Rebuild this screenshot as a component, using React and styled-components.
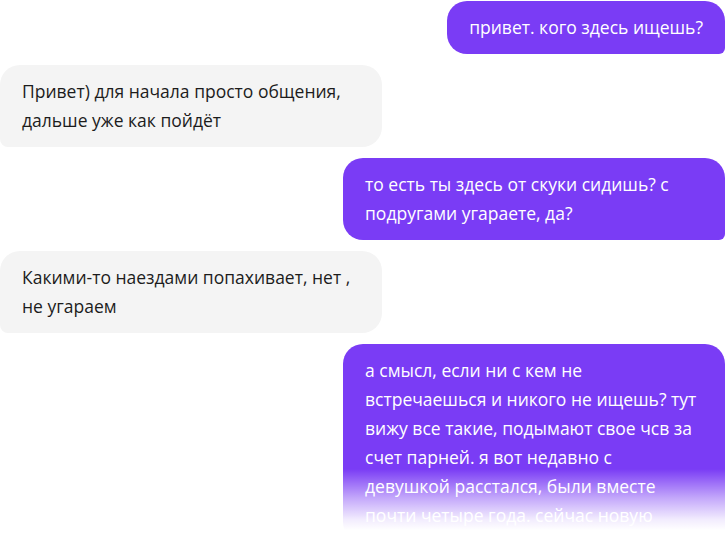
import React from "react";
import styled, { createGlobalStyle } from "styled-components";

const Global = createGlobalStyle`
  html, body { margin: 0; padding: 0; background: #ffffff; overflow: hidden; }
  body { font-family: "Open Sans", "Noto Sans", sans-serif; }
`;

const Chat = styled.div`
  width: 725px;
  height: 541px;
  box-sizing: border-box;
  padding-top: 1px;
  display: flex;
  flex-direction: column;
  gap: 11px;
  overflow: hidden;
  position: relative;
`;

const Bubble = styled.div`
  width: ${(p) => (p.$wide ? "382px" : "auto")};
  box-sizing: border-box;
  padding: 12px 22px;
  font-size: 17.5px;
  line-height: 29px;
  white-space: nowrap;
  align-self: ${(p) => (p.$out ? "flex-end" : "flex-start")};
  background: ${(p) => (p.$out ? "#7a3cf5" : "#f4f4f4")};
  color: ${(p) => (p.$out ? "#ffffff" : "#1c1c1c")};
  border-radius: ${(p) => (p.$out ? "20px 20px 6px 20px" : "20px 20px 20px 8px")};
  flex-shrink: 0;
`;

const Fade = styled.div`
  position: absolute;
  left: 0;
  right: 0;
  bottom: 0;
  height: 72px;
  background: linear-gradient(to bottom, rgba(255,255,255,0) 0%, rgba(255,255,255,0.55) 40%, rgba(255,255,255,0.9) 70%, #ffffff 85%);
  pointer-events: none;
`;

const messages = [
  { out: true, lines: ["привет. кого здесь ищешь?"] },
  { out: false, lines: ["Привет) для начала просто общения,", "дальше уже как пойдёт"] },
  { out: true, lines: ["то есть ты здесь от скуки сидишь? с", "подругами угараете, да?"] },
  { out: false, lines: ["Какими-то наездами попахивает, нет ,", "не угараем"] },
  {
    out: true,
    lines: [
      "а смысл, если ни с кем не",
      "встречаешься и никого не ищешь? тут",
      "вижу все такие, подымают свое чсв за",
      "счет парней. я вот недавно с",
      "девушкой расстался, были вместе",
      "почти четыре года. сейчас новую",
    ],
  },
];

export default function App() {
  return (
    <>
      <Global />
      <Chat>
        {messages.map((m, i) => (
          <Bubble key={i} $out={m.out} $wide={m.lines.length > 1}>
            {m.lines.map((l, j) => (
              <React.Fragment key={j}>
                {j > 0 && <br />}
                {l}
              </React.Fragment>
            ))}
          </Bubble>
        ))}
        <Fade />
      </Chat>
    </>
  );
}
